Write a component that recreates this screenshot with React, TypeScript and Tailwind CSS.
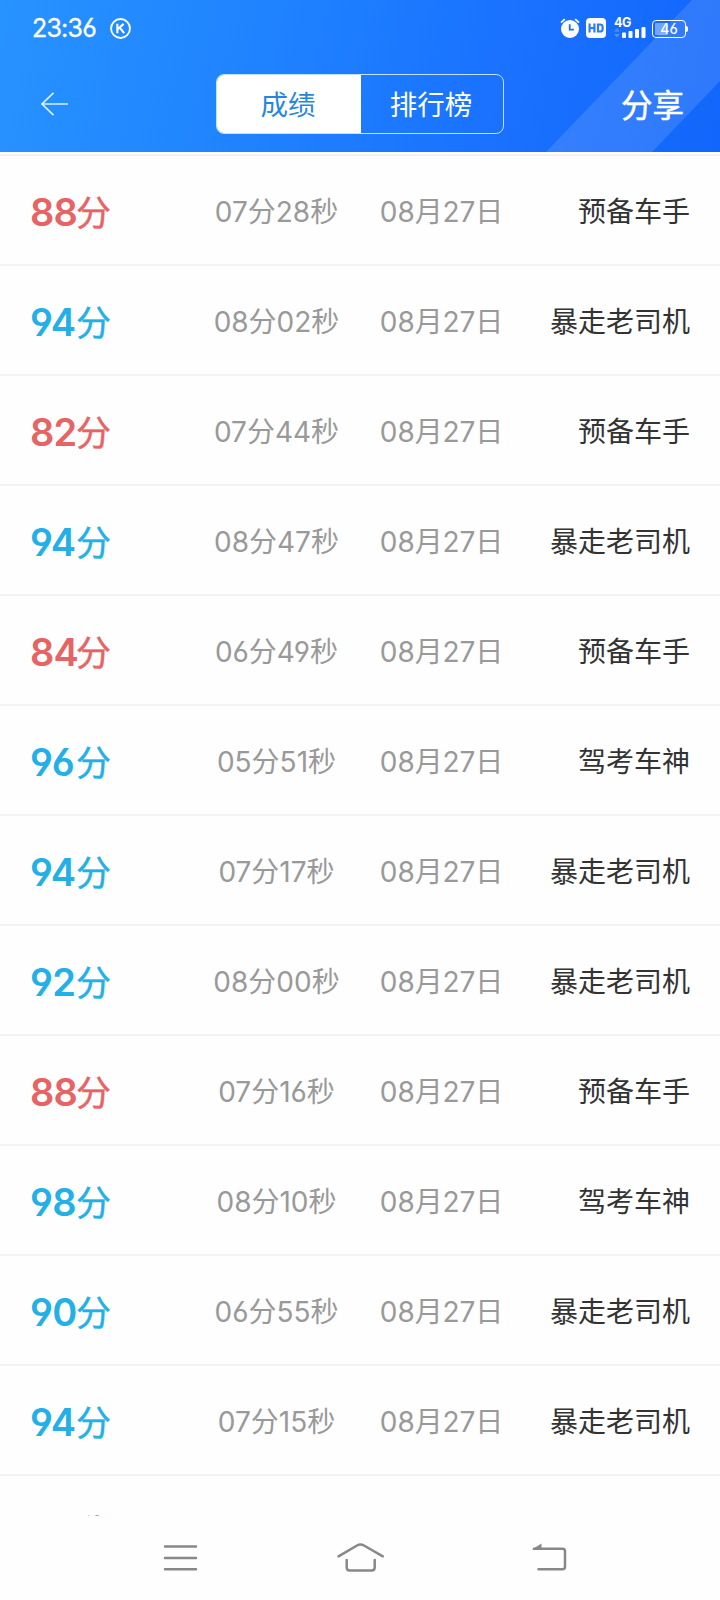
type Result = { score: number; time: string; title: string };

const results: Result[] = [
  { score: 88, time: "07分28秒", title: "预备车手" },
  { score: 94, time: "08分02秒", title: "暴走老司机" },
  { score: 82, time: "07分44秒", title: "预备车手" },
  { score: 94, time: "08分47秒", title: "暴走老司机" },
  { score: 84, time: "06分49秒", title: "预备车手" },
  { score: 96, time: "05分51秒", title: "驾考车神" },
  { score: 94, time: "07分17秒", title: "暴走老司机" },
  { score: 92, time: "08分00秒", title: "暴走老司机" },
  { score: 88, time: "07分16秒", title: "预备车手" },
  { score: 98, time: "08分10秒", title: "驾考车神" },
  { score: 90, time: "06分55秒", title: "暴走老司机" },
  { score: 94, time: "07分15秒", title: "暴走老司机" },
];

function StatusBar() {
  return (
    <div className="flex h-14 items-center justify-between pl-8 pr-[34px] text-white">
      <div className="flex items-center">
        <span className="w-[78px] pt-px text-[25px] leading-none tracking-[-0.8px] [-webkit-text-stroke:0.3px_white]">23:36</span>
        <svg width="21" height="21" viewBox="0 0 20 20" fill="none" stroke="currentColor">
          <circle cx="10" cy="10" r="9" strokeWidth="1.8" />
          <path d="M7 5.5v9M13 5.6 7.3 10.8M9.3 9.2l4.2 5.2" strokeWidth="2" />
        </svg>
      </div>
      <div className="flex items-center">
        <svg width="20" height="20" viewBox="0 0 20 20" fill="none">
          <circle cx="10" cy="11" r="9" fill="white" />
          <path d="M1 4.6 4.8 1.2M19 4.6 15.2 1.2" stroke="white" strokeWidth="1.8" />
          <path d="M9.7 6.3v5.4h4.2" stroke="#1a73ff" strokeWidth="1.8" />
        </svg>
        <svg className="ml-[6px]" width="20" height="20" viewBox="0 0 20 20" fill="none">
          <rect width="20" height="20" rx="4" fill="white" />
          <path d="M3.6 5.5v9M8.4 5.5v9M3.6 10h5M12 6.5h1.900q2.700 0 2.700 2.300v2.400q0 2.300-2.700 2.300h-1.900z" stroke="#2a7bff" strokeWidth="2.200" />
        </svg>
        <div className="relative ml-2 h-[22px] w-[32px]">
          <span className="absolute left-0 top-0 text-[12.5px] font-bold leading-none tracking-[-0.5px]">4G</span>
          <svg className="absolute inset-0" width="32" height="22" viewBox="0 0 32 22" fill="white">
            <path d="M0 14.5 3 11l3 3.500zM0 17l3 3.500L6 17z" opacity=".25" />
            <rect x="8" y="15.500" width="4" height="5.500" rx="1" />
            <rect x="14.500" y="14" width="4" height="7" rx="1" />
            <rect x="21" y="12" width="4" height="9" rx="1" />
            <rect x="27.500" y="10" width="4" height="11" rx="1" />
          </svg>
        </div>
        <div className="relative ml-[6px] mt-[2px] flex h-[18px] w-[34px] items-center justify-center rounded-[4px] border-[1.5px] border-white">
          <span className="absolute left-[2px] top-[2px] h-[12px] w-[13px] rounded-[1px] bg-white/40" />
          <span className="relative text-[14px] font-medium leading-none">46</span>
          <span className="absolute -right-[3px] top-[5px] h-[6px] w-[2px] rounded-r bg-white" />
        </div>
      </div>
    </div>
  );
}

function Header() {
  return (
    <header className="relative h-[152px] shrink-0 bg-[linear-gradient(102deg,#2793ff_0%,#1f83ff_35%,#1a72ff_68%,#1266fb_100%)]">
      <svg className="absolute inset-y-0 right-0" width="180" height="152" viewBox="0 0 180 152">
        <path d="M6 152 152 0h28v81l-68 71z" fill="white" opacity=".12" />
      </svg>
      <div className="relative">
        <StatusBar />
        <div className="flex h-24 items-center pl-10 pr-9">
          <svg width="30" height="26" viewBox="0 0 30 26" fill="none" stroke="#d9f1ff" strokeWidth="1.7">
            <path d="M28 13H2M13.500 1.800 2 13l11.500 11.200" />
          </svg>
          <div className="ml-[146px] flex h-[60px] w-[288px] overflow-hidden rounded-[8px] border border-[#c4e2ff] text-[27.5px]">
            <div className="flex w-[144px] items-center justify-center bg-white pr-[2px] pt-[3px] text-[#2586e0]">成绩</div>
            <div className="flex flex-1 items-center justify-center pr-[2px] pt-[3px] text-white">排行榜</div>
          </div>
          <div className="ml-auto pt-[4px] text-[31.5px] leading-none text-white [-webkit-text-stroke:0.5px_white]">分享</div>
        </div>
      </div>
    </header>
  );
}

function Row({ score, time, title }: Result) {
  return (
    <li className="flex h-[110px] shrink-0 items-center border-b-2 border-[#f3f3f3] px-[30px] pt-[4px]">
      <div className={score >= 90 ? "flex w-[166px] items-baseline text-[#22b0e6]" : "flex w-[166px] items-baseline text-[#e66464]"}>
        <span className="w-[46px] text-[38px] font-semibold leading-none tracking-[-0.8px]">{score}</span>
        <span className="-mt-px mb-px text-[35px] leading-none [-webkit-text-stroke:0.4px_currentColor]">分</span>
      </div>
      <div className="w-[161px] text-center text-[28px] leading-none text-[#999999]">{time}</div>
      <div className="ml-[4px] w-[161px] text-center text-[28px] leading-none tracking-[-0.1px] text-[#999999]">08月27日</div>
      <div className="flex-1 text-right text-[28px] leading-none text-[#333333]">{title}</div>
    </li>
  );
}

function NavBar() {
  return (
    <nav className="h-[84px] shrink-0 bg-[#fefefe]">
      <svg width="720" height="84" viewBox="0 1516 720 84" fill="none" stroke="#888888" strokeWidth="2.500" strokeLinecap="round" strokeLinejoin="round">
        <path d="M165 1546.500h31M165 1558h31M165 1569.300h31" />
        <path d="M338.500 1556.300 357 1545.500q3.500-2 7 0l18.800 10.800M346.700 1560v7.500q0 3 3 3h22q3 0 3-3V1560" />
        <path d="M538.500 1569.300h24q2.500 0 2.500-2.500v-15.600q0-2.500-2.500-2.500H534" />
        <path d="M532 1549.500 541.500 1543.500v6z" fill="#888888" stroke="none" />
      </svg>
    </nav>
  );
}

export default function App() {
  return (
    <div className="flex h-[1600px] w-[720px] flex-col overflow-hidden bg-[#fefefe] font-['Inter','Noto_Sans_CJK_SC',sans-serif] [font-feature-settings:'cv03','cv04']">
      <Header />
      <main className="flex-1 overflow-hidden pt-[2px]">
        <ul className="flex flex-col border-t-2 border-[#f3f3f3]">
          {results.map((result, index) => (
            <Row key={index} {...result} />
          ))}
        </ul>
        <svg className="ml-[87px] mt-[38px]" width="14" height="2" viewBox="0 0 14 2" fill="#22b0e6">
          <rect x="1" y="1" width="1.500" height="1" opacity=".4" />
          <rect x="8.500" y="1" width="3" height="1" opacity=".8" />
        </svg>
      </main>
      <NavBar />
    </div>
  );
}
